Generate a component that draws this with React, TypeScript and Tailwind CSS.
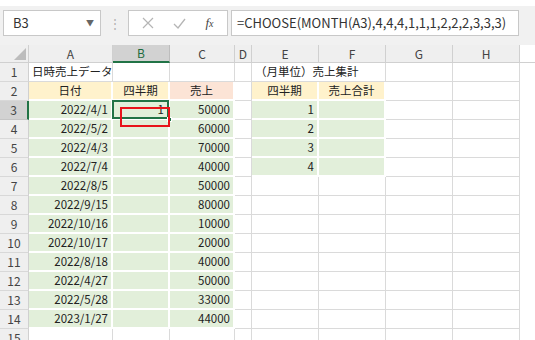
import React from 'react';

const font = { fontFamily: '"Noto Sans CJK JP", "Noto Sans", sans-serif' };

const cols = ['A', 'B', 'C', 'D', 'E', 'F', 'G', 'H'];

type Cell = { t?: string; bg?: string; align?: 'l' | 'c' | 'r' };

const data: [string, string, string][] = [
  ['2022/4/1', '1', '50000'],
  ['2022/5/2', '', '60000'],
  ['2022/4/3', '', '70000'],
  ['2022/7/4', '', '40000'],
  ['2022/8/5', '', '50000'],
  ['2022/9/15', '', '80000'],
  ['2022/10/16', '', '10000'],
  ['2022/10/17', '', '20000'],
  ['2022/8/18', '', '40000'],
  ['2022/4/27', '', '50000'],
  ['2022/5/28', '', '33000'],
  ['2023/1/27', '', '44000'],
];

const GREEN = 'bg-[#e2efda]';
const YELLOW = 'bg-[#fff2cc]';
const PEACH = 'bg-[#fce4d6]';

function rowCells(r: number): Cell[] {
  if (r === 2) {
    return [
      { t: '日付', bg: YELLOW, align: 'c' },
      { t: '四半期', bg: YELLOW, align: 'c' },
      { t: '売上', bg: PEACH, align: 'c' },
      {},
      { t: '四半期', bg: YELLOW, align: 'c' },
      { t: '売上合計', bg: YELLOW, align: 'c' },
      {},
      {},
    ];
  }
  if (r >= 3 && r <= 14) {
    const [d, q, s] = data[r - 3];
    const summary = r <= 6;
    return [
      { t: d, bg: GREEN, align: 'r' },
      { t: q, bg: GREEN, align: 'r' },
      { t: s, bg: GREEN, align: 'r' },
      {},
      summary ? { t: String(r - 2), bg: GREEN, align: 'r' } : {},
      summary ? { bg: GREEN } : {},
      {},
      {},
    ];
  }
  return cols.map(() => ({}));
}

function DataCell({ c }: { c: Cell }) {
  const colored = !!c.bg;
  return (
    <div
      className={`h-[19px] flex items-center px-[3px] text-[11.5px] text-[#222] whitespace-nowrap ${
        colored ? `${c.bg} border-r-2 border-b-2 border-white` : 'border-r border-b border-[#dadada]'
      } ${c.align === 'r' ? 'justify-end' : c.align === 'c' ? 'justify-center' : 'justify-start'}`}
    >
      {c.t}
    </div>
  );
}

export default function App() {
  return (
    <div className="w-[535px] h-[340px] overflow-hidden bg-white relative" style={font}>
      {/* toolbar / formula bar */}
      <div className="mt-[6px] h-[39px] bg-[#f1f1f1] flex items-start pt-[4px] pl-[3px] pr-[16px]">
        <div className="w-[98px] h-[26px] bg-white border border-[#c8c8c8] flex items-center justify-between pl-[9px] pr-[6px]">
          <span className="text-[13px] text-[#333]">B3</span>
          <span className="text-[8px] text-[#666]">▼</span>
        </div>
        <div className="w-[27px] h-[26px] flex items-center justify-center text-[#b0b0b0] text-[12px]">⋮</div>
        <div className="w-[100px] h-[26px] bg-white border border-[#c8c8c8] flex items-center justify-around px-[4px]">
          <svg width="12" height="12" viewBox="0 0 12 12">
            <path d="M1 1 L11 11 M11 1 L1 11" stroke="#b5b5b5" strokeWidth="1.2" fill="none" />
          </svg>
          <svg width="13" height="11" viewBox="0 0 13 11">
            <path d="M1 6 L5 10 L12 1" stroke="#b5b5b5" strokeWidth="1.3" fill="none" />
          </svg>
          <span className="text-[13px] italic text-[#444]" style={{ fontFamily: '"Liberation Serif", serif' }}>
            f<span className="text-[10px]">x</span>
          </span>
        </div>
        <div className="ml-[3px] flex-1 h-[26px] bg-white border border-[#c8c8c8] flex items-center pl-[5px] overflow-hidden">
          <span className="text-[13px] text-[#333] whitespace-nowrap">=CHOOSE(MONTH(A3),4,4,4,1,1,1,2,2,2,3,3,3)</span>
        </div>
      </div>

      {/* sheet */}
      <div className="grid grid-cols-[29px_84px_57px_65px_17px_67px_67px_67px_67px_1fr]">
        {/* column headers */}
        <div className="h-[18px] bg-[#efefef] border-r border-b border-[#d0d0d0] relative">
          <svg className="absolute right-[2px] bottom-[2px]" width="12" height="12" viewBox="0 0 12 12">
            <path d="M12 0 L12 12 L0 12 Z" fill="#bcbcbc" />
          </svg>
        </div>
        {cols.map((c) => (
          <div
            key={c}
            className={`h-[18px] flex items-center justify-center text-[12px] border-r ${
              c === 'B'
                ? 'bg-[#d2d2d2] text-[#1e6b3f] border-[#bdbdbd] border-b-2 border-b-[#217346]'
                : 'bg-[#efefef] text-[#444] border-[#d0d0d0] border-b border-b-[#d0d0d0]'
            }`}
          >
            {c}
          </div>
        ))}
        <div className="h-[18px] bg-white border-b border-[#d0d0d0]" />

        {Array.from({ length: 15 }, (_, i) => i + 1).map((r) => (
          <React.Fragment key={r}>
            <div
              className={`h-[19px] flex items-center justify-center text-[12px] text-[#444] border-b ${
                r === 3
                  ? 'bg-[#d2d2d2] border-[#c5c5c5] border-r-2 border-r-[#217346]'
                  : 'bg-[#efefef] border-[#d8d8d8] border-r border-r-[#d0d0d0]'
              }`}
            >
              {r}
            </div>
            {r === 1 ? (
              <>
                <DataCell c={{ t: '日時売上データ' }} />
                <DataCell c={{}} />
                <DataCell c={{}} />
                <DataCell c={{}} />
                <div className="col-span-2 h-[19px] flex items-center px-[3px] text-[11.5px] text-[#222] whitespace-nowrap border-r border-b border-[#dadada]">
                  （月単位）売上集計
                </div>
                <DataCell c={{}} />
                <DataCell c={{}} />
              </>
            ) : r === 3 ? (
              <>
                <DataCell c={rowCells(3)[0]} />
                <div className="h-[19px] relative bg-[#e2efda] border-r-2 border-b-2 border-white">
                  <div className="absolute inset-[-1px] border-2 border-[#217346] flex items-center justify-end pr-[3px] text-[11.5px] text-[#222]">
                    1
                  </div>
                  <div className="absolute right-[-4px] bottom-[-4px] w-[5px] h-[5px] bg-[#217346] border border-white" />
                </div>
                {rowCells(3).slice(2).map((c, j) => (
                  <DataCell key={j} c={c} />
                ))}
              </>
            ) : (
              rowCells(r).map((c, j) => <DataCell key={j} c={c} />)
            )}
            <div className="h-[19px]" />
          </React.Fragment>
        ))}
      </div>

      {/* red annotation box */}
      <div className="absolute left-[120px] top-[107px] w-[50px] h-[20px] border-2 border-[#e8141b]" />
    </div>
  );
}
